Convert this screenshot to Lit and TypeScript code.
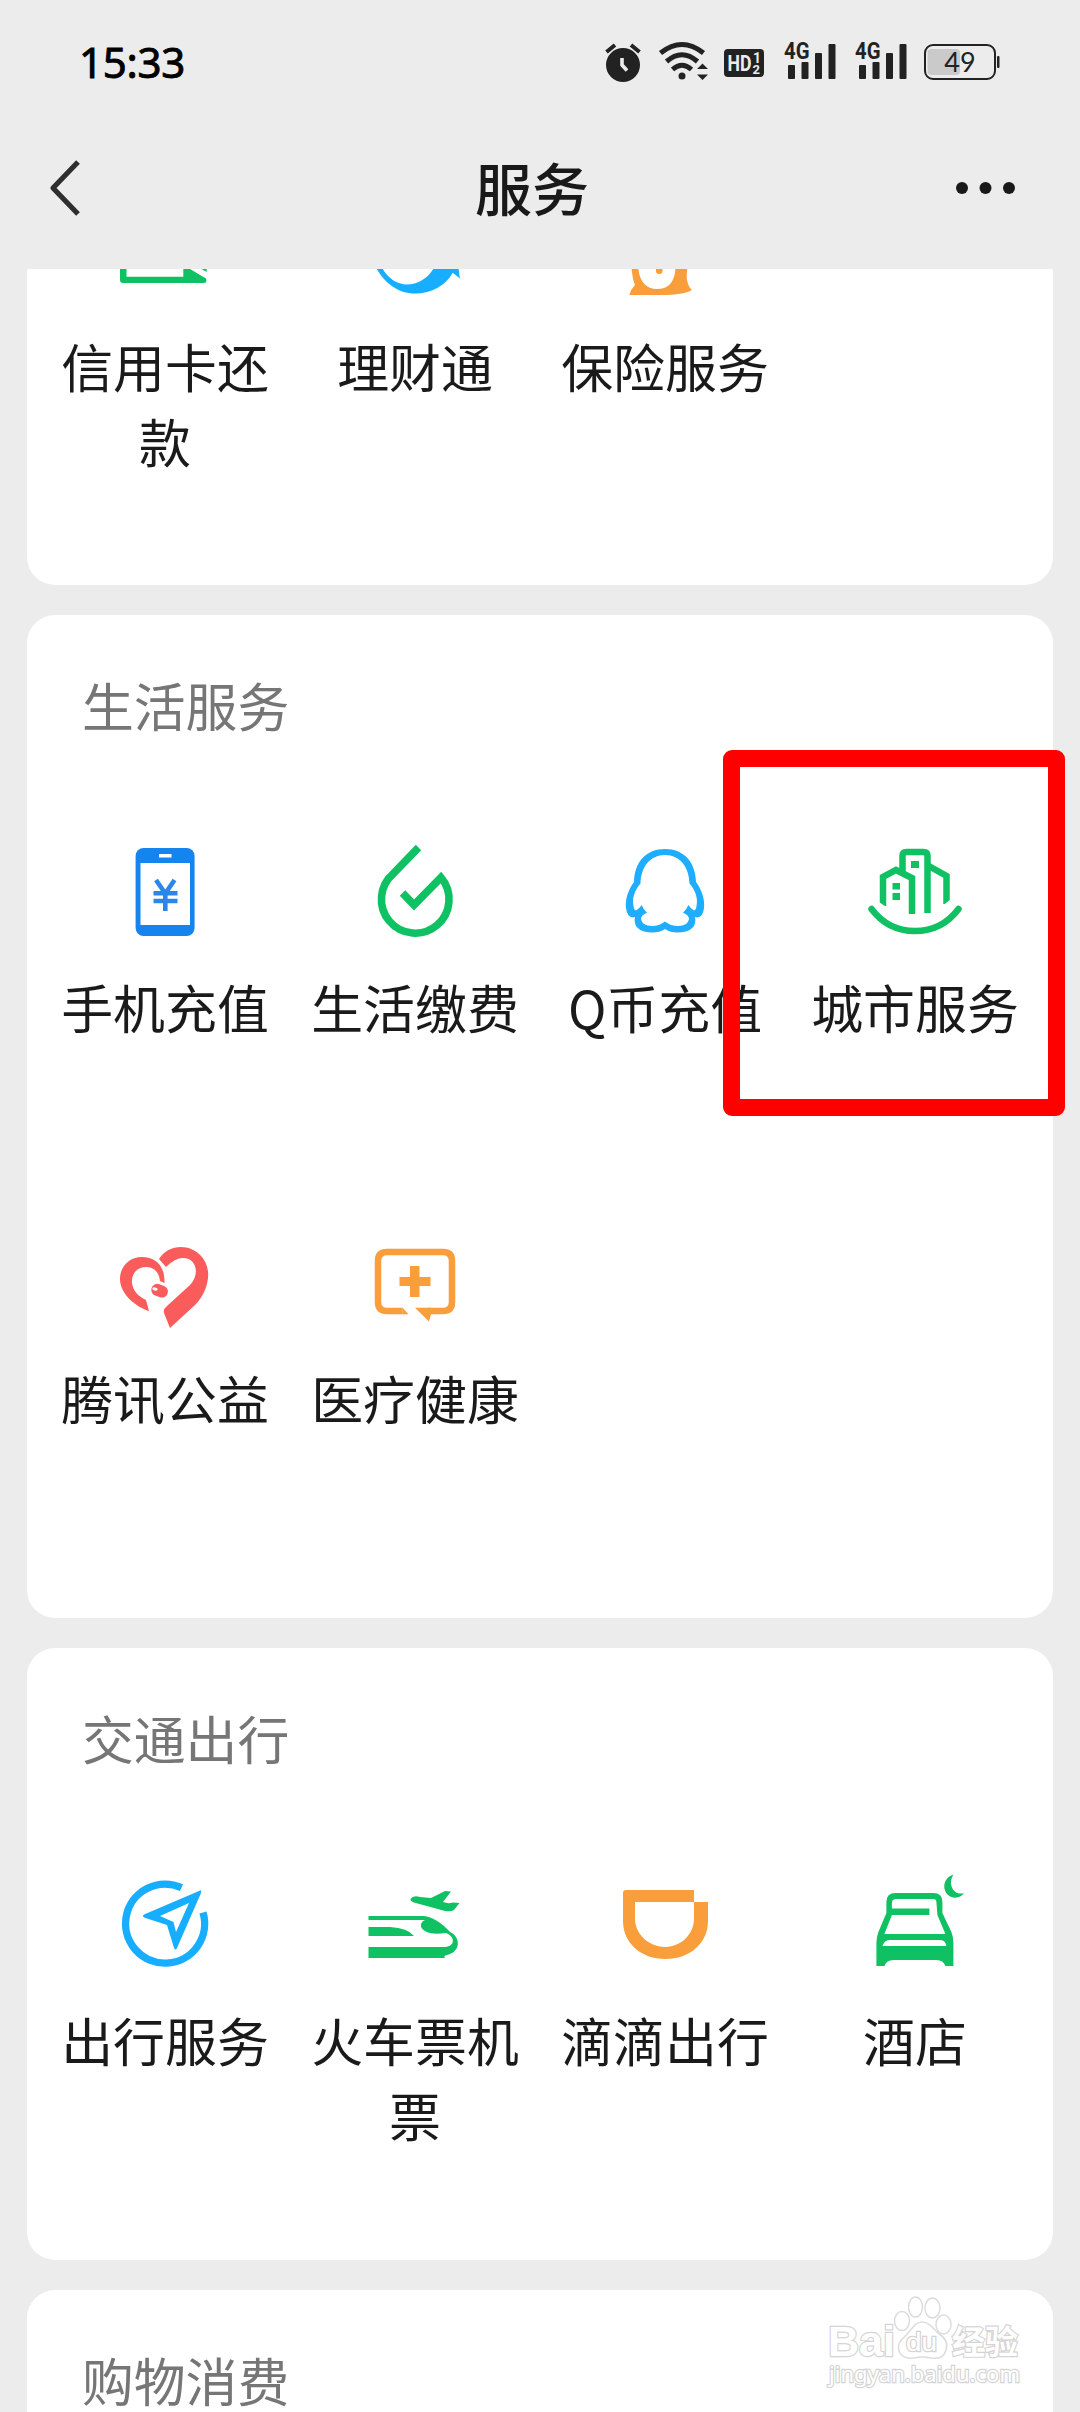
import { LitElement, html, svg, css } from "lit";
import { customElement, property } from "lit/decorators.js";

const GREEN = "#0fc162";
const BLUE = "#17aeff";
const ORANGE = "#fa9d3b";
const RED = "#fa5b5b";

/* Every service icon is drawn on a 100x100 canvas centred over its label. */
const icons: Record<string, unknown> = {
  card: svg`<path fill="${GREEN}" d="M5 12H11.500V77.700H68.300V66L91 79.500Q92.500 84 89 84H8Q5 84 5 81ZM11.500 12H91.700V73L66 58H85.500V18H11.500Z"/>`,
  wealth: svg`<path fill="${BLUE}" d="M6 45Q7 62 11.700 70C20 84 33 94.500 50 94.500C67 94.500 81 86 87.700 73.700L95 79.500Q93.500 72 93 60L72 60Q71 66 68.300 70C62 80 52 85.500 42 85.500C32 85.500 23 79 17.700 70Q10 55 6 45Z"/>`,
  insurance: svg`<path fill="${ORANGE}" fill-rule="evenodd" d="M16 50Q16 78 20 86Q16 90 14.300 96H52Q72 95 76.700 91Q70 84 72.300 70V50ZM23.300 50V70Q26 90 42 90Q58 90 60.300 72V50Z"/><rect fill="${ORANGE}" x="41" y="56" width="6.500" height="19" rx="3.200"/>`,
  phone: svg`<rect x="20.600" y="8" width="59" height="88" rx="8" fill="#1684ee"/><path fill="#fff" d="M25.500 23H75V85H25.500ZM44 14H56.500V17.500H44Z"/><path fill="none" stroke="#2b86ea" stroke-width="4.600" d="M41 40L50.300 53.500L59.500 40M38.500 53.300H62.500M38.500 61H62.500M50.300 52V71"/>`,
  bill: svg`<path fill="none" stroke="${GREEN}" stroke-width="7.600" d="M53.500 7.500L28.500 33.500A33.800 33.800 0 1 0 76 37.500L49 65L37.500 53"/>`,
  qcoin: svg`<path fill="#1eadff" fill-rule="evenodd" d="M50 9C69 9 80.500 22 81 42C87 50 90 60 89 68Q88 77 82 77.500L80 77Q82 88 71 91.500Q58 94.500 50 89Q42 94.500 29 91.500Q18 88 20 77L18 77.500Q12 77 11 68C10 60 13 50 19 42C19.500 22 31 9 50 9ZM50 15C35 15 26 27 25.500 43.500C19 51 17 59 18.500 66Q19 70 21 70.500Q24 69 26.700 65Q28 69 32 72.700Q26 75 26 79Q27 86 37 86Q44 86 50 81.500Q56 86 63 86Q73 86 74 79Q74 75 68 72.700Q72 69 73.300 65Q76 69 79 70.500Q81 70 81.500 66C83 59 81 51 74.500 43.500C74 27 65 15 50 15Z"/>`,
  city: svg`<g fill="none" stroke="${GREEN}" stroke-width="6.500"><path d="M18 66V37L31 30L47 38V74"/><path d="M37.500 33V16Q37.500 12 41.500 12H58.500Q62.500 12 62.500 16V73"/><path d="M62 25L81.500 36V64"/><path stroke-linecap="round" d="M6.500 69Q23 91 50 91Q77 91 93.500 69"/></g><path fill="${GREEN}" d="M46 21H54V28H46ZM27.500 43H35V49.500H27.500ZM27.500 53H35V60H27.500Z"/><path fill="#fff" d="M14 62L22 67.500H14ZM86 59L76 67H86Z"/>`,
  charity: svg`<path fill="${RED}" d="M34 80C21 76 5 63 5 48C5 35 15 26 27 26C40 26 50 34 49.500 52L45 50C44 40 38 36 31 36C23 36 16 42 17 52C18 60 23 65 31 69ZM44 28C49 20 57 16 66 16C82 16 95 30 93 47C92 56 88 66 80 74L55 97L49 82Q48 78 52 75L75 54C85 44 82 27 68 27Q60 27 51 36Z"/><rect fill="${RED}" x="36" y="53.500" width="17" height="12" rx="6" transform="rotate(20 44 60)"/><ellipse cx="40" cy="58" rx="2.700" ry="1.600" fill="#fff" transform="rotate(12 40 58)"/>`,
  health: svg`<path fill="none" stroke="${ORANGE}" stroke-width="6.500" d="M37.700 80H22Q13 80 13 71V30Q13 21 22 21H78Q87 21 87 30V71Q87 80 78 80H62"/><path fill="${ORANGE}" d="M45 35H54.500V46H65.500V55H54.500V66H45V55H34.500V46H45ZM50 76.800H66V83.200L64 90.500ZM37.500 76.800L43.500 83.200H37.500Z"/>`,
  travel: svg`<path fill="none" stroke="${BLUE}" stroke-width="7.400" d="M66.500 14.700A39.500 39.500 0 1 0 88 39.500"/><path fill="${BLUE}" fill-rule="evenodd" d="M86 18Q86 16.500 84 18L29 41.500Q27 43 29 44.500L52 52L59 75Q60.500 78 62 75L86 20ZM74 30L61 59L58.500 49L45 43Z"/>`,
  train: svg`<g fill="${GREEN}" transform="translate(0 -3)"><path d="M3.500 46H57C67 46 77 53 85 62C96 67 96 82 82 85Q78 86 80 88H3.500V77H79C90 77 91 67 81 63Q66 65 60 61Q55 58 56 54Q57 51 60 50H3.500ZM3.500 57H25Q43 58 49 66H3.500Z"/><path d="M45.500 29Q48 25 55 27L66 28L80 21L86 21.500L78 32Q83 34 88 32.500L94.500 33L89 40Q86 42 80 41L49 32.500Q45 31 45.500 29Z"/></g>`,
  didi: svg`<path fill="${ORANGE}" fill-rule="evenodd" d="M11 17H79V29H93V48C93 70 75 86 50.500 86C26 86 8 70 8 48V20Q8 17 11 17ZM20 29V46C20 60 33 74 50 74C67 74 79 60 79 46V29Z"/>`,
  hotel: svg`<g fill="${GREEN}" transform="translate(2.400 0)"><path fill-rule="evenodd" d="M28 20H66Q75 20 75 29V40L84 59Q86 64 86 70V93H78Q76 87 69 87H26Q19 87 17 93H9V70Q9 64 11 59L19 40V29Q19 20 28 20ZM29 26Q24.500 26 24.500 30V35.500H62V42H24.500L17 61H78L70 42L69 29Q69 26 66 26ZM15 73H79Q78 67 73 67H22Q17 67 15 73Z"/><path d="M86 1.500C78 4 75 12 78 18.500C82 27 93 26 96.500 20C91 22 86 19 84 13Q82.500 7 86 1.500Z"/></g>`,
};

interface Service {
  icon: string;
  label: string;
}

const money: Service[] = [
  { icon: "card", label: "信用卡还款" },
  { icon: "wealth", label: "理财通" },
  { icon: "insurance", label: "保险服务" },
];
const life: Service[] = [
  { icon: "phone", label: "手机充值" },
  { icon: "bill", label: "生活缴费" },
  { icon: "qcoin", label: "Q币充值" },
  { icon: "city", label: "城市服务" },
  { icon: "charity", label: "腾讯公益" },
  { icon: "health", label: "医疗健康" },
];
const transport: Service[] = [
  { icon: "travel", label: "出行服务" },
  { icon: "train", label: "火车票机票" },
  { icon: "didi", label: "滴滴出行" },
  { icon: "hotel", label: "酒店" },
];

@customElement("service-card")
class ServiceCard extends LitElement {
  @property() heading = "";
  @property({ attribute: false }) items: Service[] = [];

  static styles = css`
    :host {
      display: block;
      box-sizing: border-box;
      flex: none;
      background: #fff;
      border-radius: 28px;
      overflow: hidden;
      padding-bottom: 88px;
    }
    .heading {
      margin: 0;
      padding: 51px 0 0 55px;
      height: 81px;
      font-size: 51.800px;
      line-height: 78px;
      font-weight: 400;
      color: #767676;
    }
    .grid {
      display: grid;
      grid-template-columns: repeat(4, 250px);
      grid-auto-rows: 391px;
      padding-left: 13px;
    }
    .item {
      display: flex;
      flex-direction: column;
      align-items: center;
      padding-top: 93px;
    }
    .icon {
      width: 100px;
      height: 100px;
      flex: none;
      margin-bottom: 29px;
    }
    .label {
      width: 212px;
      font-size: 51.900px;
      line-height: 75px;
      text-align: center;
      color: #1a1a1a;
      word-break: break-all;
    }
  `;

  render() {
    return html`
      ${this.heading ? html`<h2 class="heading">${this.heading}</h2>` : ""}
      <div class="grid">
        ${this.items.map(
          (s) => html`<div class="item">
            <svg class="icon" viewBox="0 0 100 100">${icons[s.icon]}</svg>
            <div class="label">${s.label}</div>
          </div>`
        )}
      </div>
    `;
  }
}

@customElement("status-bar")
class StatusBar extends LitElement {
  static styles = css`
    :host {
      display: flex;
      justify-content: space-between;
      height: 120px;
      padding-left: 79px;
    }
    .time {
      font-family: "Noto Sans", sans-serif;
      font-size: 42px;
      line-height: 124px;
      font-weight: 400;
      letter-spacing: -0.3px;
      -webkit-text-stroke: 0.9px #000;
      color: #000;
    }
    .signals {
      width: 440px;
      height: 90px;
      margin: 20px 60px 0 0;
    }
  `;

  render() {
    const ink = "#222";
    const bars = (x: number) => svg`
      <text x="${x - 4}" y="39" font-family="Roboto, sans-serif" font-weight="700" font-size="24" textLength="25.500" lengthAdjust="spacingAndGlyphs" fill="${ink}">4G</text>
      <g fill="${ink}">
        <rect x="${x}" y="45" width="7" height="14" rx="1"/>
        <rect x="${x + 13.500}" y="42" width="7" height="17" rx="1"/>
        <rect x="${x + 27}" y="33" width="7" height="26" rx="1"/>
        <rect x="${x + 40.500}" y="24" width="7" height="35" rx="1"/>
      </g>`;
    return html`
      <div class="time">15:33</div>
      <svg class="signals" viewBox="0 0 440 90">
        <circle cx="43" cy="45" r="17" fill="${ink}" />
        <path d="M26.500 32L35 25M51 25L59.500 32" stroke="${ink}" stroke-width="4" fill="none" />
        <path d="M42 38V45L47 50.500" stroke="#ececec" stroke-width="3.600" fill="none" />
        <g fill="none" stroke="${ink}" stroke-width="5">
          <path d="M80.500 33Q102 16 123.500 33" />
          <path d="M86.500 41.500Q102 28 117.500 41.500" />
          <path d="M92.500 49.500Q102 41 111.500 49.500" />
        </g>
        <circle cx="102" cy="56" r="3.500" fill="${ink}" />
        <path fill="${ink}" d="M117 49L122.500 43.500L128 49ZM117 54.500H128L122.500 60Z" />
        <rect x="144" y="29" width="40" height="28" rx="4" fill="${ink}" />
        <g fill="#ececec" font-family="Roboto, sans-serif" font-weight="700">
          <text x="147.500" y="51" font-size="22.500" textLength="24" lengthAdjust="spacingAndGlyphs">HD</text>
          <text x="173" y="43" font-size="14">1</text>
          <text x="172.500" y="54" font-size="13">2</text>
        </g>
        ${bars(208)} ${bars(279)}
        <rect x="347.500" y="29" width="32.500" height="26" rx="4" fill="#cacaca" />
        <rect x="345" y="25" width="70" height="34" rx="8" fill="none" stroke="${ink}" stroke-width="2" />
        <rect x="417" y="36" width="2.500" height="12" rx="1" fill="${ink}" />
        <text x="380" y="51.500" font-family="Lato, sans-serif" font-size="27" text-anchor="middle" fill="${ink}">49</text>
      </svg>
    `;
  }
}

@customElement("app-root")
class AppRoot extends LitElement {
  static styles = css`
    :host {
      display: block;
      position: relative;
      box-sizing: border-box;
      width: 1080px;
      height: 2412px;
      overflow: hidden;
      background: #ececec;
      font-family: "Noto Sans CJK SC", sans-serif;
    }
    .nav {
      display: grid;
      grid-template-columns: 192px 1fr 208px;
      align-items: center;
      height: 149px;
    }
    .back {
      width: 60px;
      height: 80px;
      margin: 0 0 13px 36px;
    }
    .title {
      margin: 0 0 17px 0;
      text-align: center;
      font-size: 57px;
      font-weight: 500;
      line-height: 80px;
      color: #191919;
    }
    .more {
      width: 80px;
      height: 40px;
      margin: 0 0 13px 73px;
    }
    .list {
      display: flex;
      flex-direction: column;
      gap: 30px;
      height: 2143px;
      padding: 0 27px;
      overflow: hidden;
    }
    .first {
      height: 316px;
      border-radius: 0 0 28px 28px;
      display: flex;
      flex-direction: column;
      justify-content: flex-end;
    }
    .second {
      height: 1003px;
    }
    .third {
      height: 612px;
    }
    .fourth {
      height: 220px;
    }
    .marker {
      position: absolute;
      left: 723px;
      top: 750px;
      width: 342px;
      height: 366px;
      box-sizing: border-box;
      border: 17px solid #fe0000;
      border-radius: 9px;
    }
    .watermark {
      position: absolute;
      left: 820px;
      top: 2290px;
      width: 220px;
      height: 110px;
    }
  `;

  render() {
    return html`
      <status-bar></status-bar>
      <header class="nav">
        <svg class="back" viewBox="0 0 60 80">
          <path d="M42 14L17 40L42 66" fill="none" stroke="#2e2e2e" stroke-width="5.200" stroke-linejoin="round" />
        </svg>
        <h1 class="title">服务</h1>
        <svg class="more" viewBox="0 0 80 40" fill="#191919">
          <circle cx="17" cy="20" r="6" /><circle cx="40.500" cy="20" r="6" /><circle cx="64" cy="20" r="6" />
        </svg>
      </header>
      <main class="list">
        <service-card class="first" .items=${money}></service-card>
        <service-card class="second" heading="生活服务" .items=${life}></service-card>
        <service-card class="third" heading="交通出行" .items=${transport}></service-card>
        <service-card class="fourth" heading="购物消费"></service-card>
      </main>
      <div class="marker"></div>
      <svg class="watermark" viewBox="0 0 220 110">
        <g fill="#fff" stroke="#dcdcdc" stroke-width="1.500">
          <ellipse cx="82" cy="31" rx="7.500" ry="9.500" />
          <ellipse cx="95.500" cy="17" rx="7" ry="10" />
          <ellipse cx="112.500" cy="18" rx="7.500" ry="10" />
          <ellipse cx="123.500" cy="34.500" rx="7.500" ry="9.500" />
          <path d="M102 32C109 32 113 38 118 43C126 48 128 54 126 60C124 68 117 69 111 68Q102 66 94 68C86 69 79 66 78.500 58C78 51 84 48 89 42C93 37 96 32 102 32Z" />
        </g>
        <g fill="#fff" stroke="#d4d4d4" stroke-width="2.400" paint-order="stroke" font-family="Liberation Sans, sans-serif" font-weight="700">
          <text x="8" y="66" font-size="43" textLength="67" lengthAdjust="spacingAndGlyphs">Bai</text>
          <text x="86" y="61" font-size="26" font-weight="400" textLength="31" lengthAdjust="spacingAndGlyphs">du</text>
          <text x="132" y="64" font-size="33" font-family="Noto Sans CJK SC, sans-serif">经验</text>
          <text x="9" y="92" font-size="22" font-weight="400" font-family="Noto Sans, sans-serif" textLength="191" lengthAdjust="spacingAndGlyphs">jingyan.baidu.com</text>
        </g>
      </svg>
    `;
  }
}
